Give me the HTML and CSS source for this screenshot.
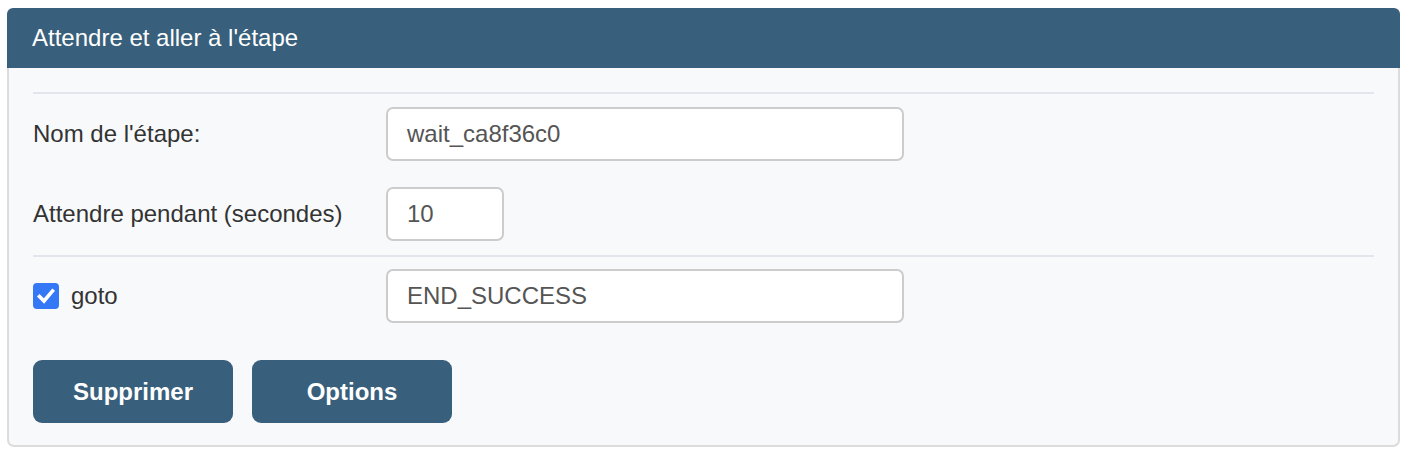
FILE: index.html
```html
<!DOCTYPE html>
<html lang="fr">
<head>
<meta charset="utf-8">
<title>Attendre et aller à l'étape</title>
<link rel="stylesheet" href="styles.css">
</head>
<body>
<div class="panel">
  <div class="panel-header">Attendre et aller à l'étape</div>
  <div class="panel-body">
    <div class="section">
      <div class="row">
        <label class="label">Nom de l'étape:</label>
        <div class="field wide">wait_ca8f36c0</div>
      </div>
      <div class="row">
        <label class="label">Attendre pendant (secondes)</label>
        <div class="field narrow">10</div>
      </div>
    </div>
    <div class="section second">
      <div class="row">
        <label class="label check-label">
          <span class="checkbox">
            <svg viewBox="0 0 26 26" width="26" height="26"><path d="M6.5 13.5 L11 18 L19.5 8" fill="none" stroke="#fff" stroke-width="3.6" stroke-linecap="square" stroke-linejoin="miter"/></svg>
          </span>
          <span>goto</span>
        </label>
        <div class="field wide">END_SUCCESS</div>
      </div>
    </div>
    <div class="actions">
      <button class="btn">Supprimer</button>
      <button class="btn">Options</button>
    </div>
  </div>
</div>
</body>
</html>
```
FILE: styles.css
```css
html, body {
  margin: 0;
  padding: 0;
  background: #ffffff;
}
body {
  padding: 8px 16px 4px 7px;
  font-family: "Liberation Sans", Arial, sans-serif;
  color: #333333;
}
.panel {
  width: 1393px;
}
.panel-header {
  height: 60px;
  background: #385f7b;
  color: #ffffff;
  font-size: 24px;
  line-height: 60px;
  padding-left: 25px;
  border-radius: 6px 6px 0 0;
}
.panel-body {
  background: #f8f9fb;
  border: 2px solid #dcdcdc;
  border-top: none;
  border-radius: 0 0 7px 7px;
  padding: 24px 24px 22px 24px;
}
.section {
  border-top: 2px solid #e2e6ec;
  padding: 13px 0 14px 0;
  display: flex;
  flex-direction: column;
  gap: 26px;
}
.section.second {
  padding: 12px 0 0 0;
}
.row {
  display: grid;
  grid-template-columns: 353px auto;
  align-items: center;
}
.label {
  font-size: 24px;
  color: #333333;
}
.check-label {
  display: flex;
  align-items: center;
  gap: 12px;
}
.checkbox {
  width: 26px;
  height: 26px;
  border-radius: 4px;
  background: #3478f6;
  display: block;
}
.checkbox svg {
  display: block;
}
.field {
  height: 50px;
  box-sizing: content-box;
  border: 2px solid #cccccc;
  border-radius: 7px;
  background: #ffffff;
  font-size: 24px;
  color: #555555;
  line-height: 50px;
  padding: 0 19px;
}
.field.wide {
  width: 476px;
}
.field.narrow {
  width: 76px;
}
.actions {
  display: flex;
  gap: 19px;
  margin-top: 37px;
}
.btn {
  width: 200px;
  height: 63px;
  border: none;
  border-radius: 9px;
  background: #385f7b;
  color: #ffffff;
  font-family: "Liberation Sans", Arial, sans-serif;
  font-weight: bold;
  font-size: 24px;
  padding: 0;
}
```
